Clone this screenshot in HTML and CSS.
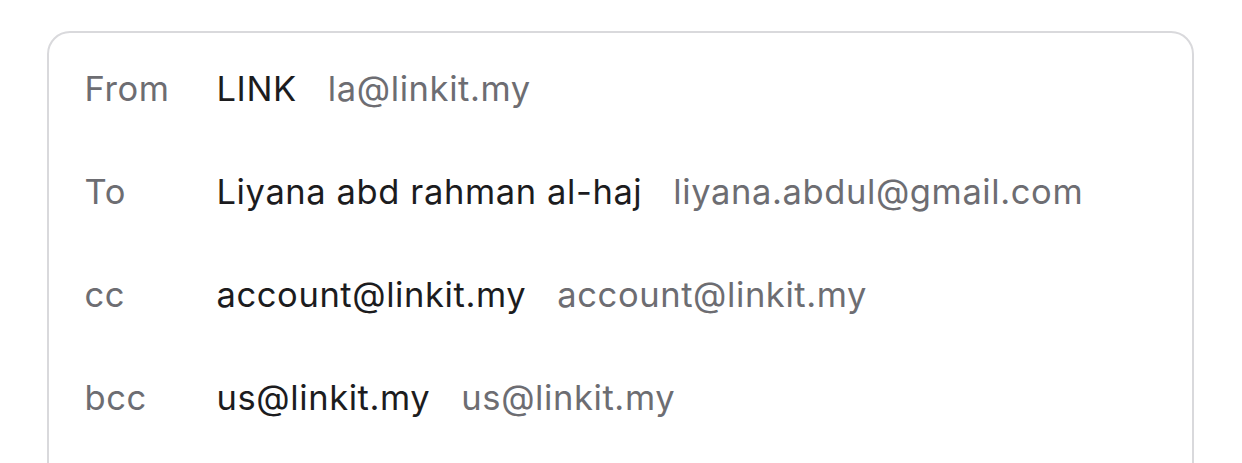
FILE: index.html
```html
<!DOCTYPE html>
<html>
<head>
<meta charset="utf-8">
<link rel="stylesheet" href="styles.css">
</head>
<body>
<div class="card">
  <div class="row"><span class="label">From</span><span class="name">LINK</span><span class="email">la@linkit.my</span></div>
  <div class="row"><span class="label">To</span><span class="name">Liyana abd rahman al-haj</span><span class="email">liyana.abdul@gmail.com</span></div>
  <div class="row"><span class="label">cc</span><span class="name">account@linkit.my</span><span class="email">account@linkit.my</span></div>
  <div class="row"><span class="label">bcc</span><span class="name">us@linkit.my</span><span class="email">us@linkit.my</span></div>
</div>
</body>
</html>
```
FILE: styles.css
```css
html, body {
  margin: 0;
  padding: 0;
  background: #ffffff;
}
body {
  font-family: Inter, "Noto Sans", sans-serif;
  font-size: 34.5px;
  letter-spacing: 0.6px;
  overflow: hidden;
  height: 463px;
}
.card {
  margin: 31px 0 0 47px;
  width: 1147px;
  height: 600px;
  box-sizing: border-box;
  border: 2.5px solid #d9d9dc;
  border-radius: 23px;
  padding: 3.5px 0 0 35.5px;
}
.row {
  display: flex;
  align-items: center;
  height: 103px;
}
.label {
  width: 132px;
  flex: none;
  color: #6d6d72;
}
.name {
  color: #1c1c1e;
  margin-right: 31px;
}
.email {
  color: #6d6d72;
}
```
